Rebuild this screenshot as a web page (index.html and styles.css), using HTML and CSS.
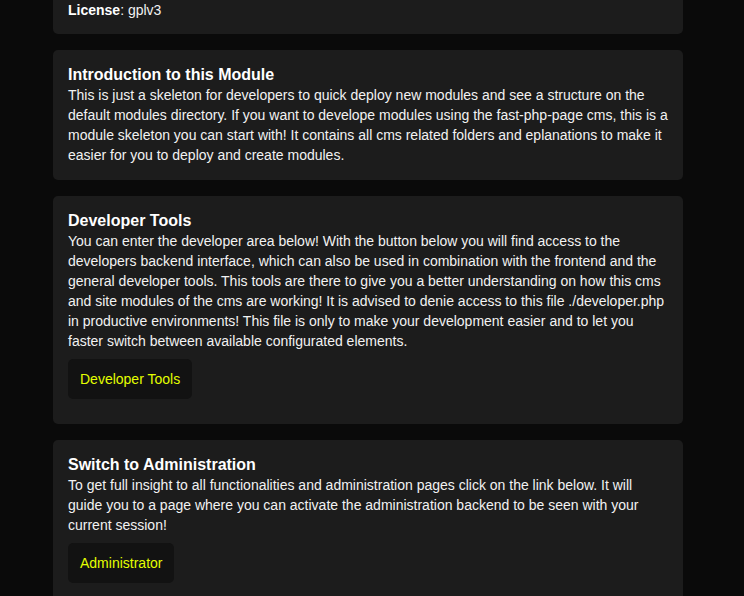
FILE: index.html
```html
<!DOCTYPE html>
<html>
<head>
<meta charset="utf-8">
<link rel="stylesheet" href="styles.css">
</head>
<body>
<main class="page">
  <section class="card card-first">
    <p class="text"><strong>License</strong>: gplv3</p>
  </section>
  <section class="card">
    <h3 class="title">Introduction to this Module</h3>
    <p class="text">This is just a skeleton for developers to quick deploy new modules and see a structure on the default modules directory. If you want to develope modules using the fast-php-page cms, this is a module skeleton you can start with! It contains all cms related folders and eplanations to make it easier for you to deploy and create modules.</p>
  </section>
  <section class="card">
    <h3 class="title">Developer Tools</h3>
    <p class="text">You can enter the developer area below! With the button below you will find access to the developers backend interface, which can also be used in combination with the frontend and the general developer tools. This tools are there to give you a better understanding on how this cms and site modules of the cms are working! It is advised to denie access to this file ./developer.php in productive environments! This file is only to make your development easier and to let you faster switch between available configurated elements.</p>
    <a class="btn" href="#">Developer Tools</a>
  </section>
  <section class="card">
    <h3 class="title">Switch to Administration</h3>
    <p class="text">To get full insight to all functionalities and administration pages click on the link below. It will guide you to a page where you can activate the administration backend to be seen with your current session!</p>
    <a class="btn" href="#">Administrator</a>
  </section>
</main>
</body>
</html>
```
FILE: styles.css
```css
html, body {
  margin: 0;
  padding: 0;
  background: #0a0a0a;
  overflow: hidden;
}
body {
  font-family: "Liberation Sans", Arial, sans-serif;
  color: #f2f2f2;
  font-size: 14px;
  line-height: 20px;
}
.page {
  width: 630px;
  margin: 0 0 0 53px;
  display: flex;
  flex-direction: column;
  gap: 16px;
}
.card {
  background: #1c1c1c;
  border-radius: 5px;
  padding: 15px;
}
.card-first {
  padding-top: 0;
  padding-bottom: 14px;
  border-radius: 0 0 5px 5px;
}
.title {
  margin: 0;
  font-size: 16px;
  line-height: 20px;
  font-weight: bold;
  color: #ffffff;
}
.text {
  margin: 0;
}
.text strong {
  color: #ffffff;
}
.btn {
  display: inline-block;
  margin: 8px 0 10px;
  padding: 11px 12px;
  line-height: 18px;
  background: #121212;
  color: #e4ff00;
  text-decoration: none;
  border-radius: 5px;
  font-size: 14px;
}
```
